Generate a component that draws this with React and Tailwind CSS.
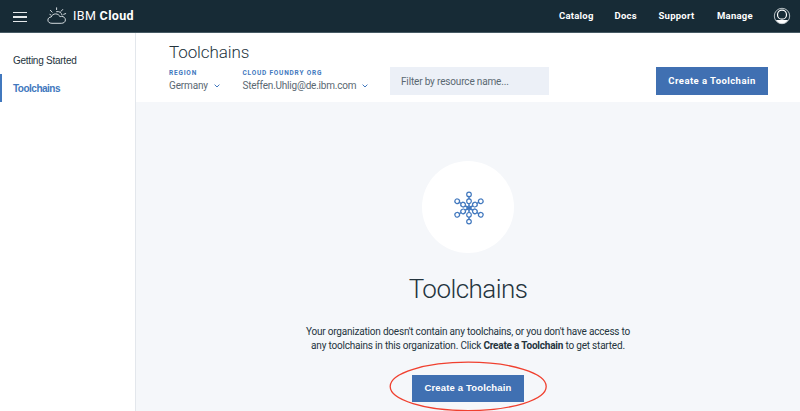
import React from "react";

function CloudLogo() {
  return (
    <svg className="block h-[18px] w-[20px]" viewBox="0 0 20 18" fill="none" stroke="#d3dade" strokeWidth="1" strokeLinecap="round">
      <path d="M4.6 16.3C2.3 16.3.9 14.9.9 13.1c0-1.8 1.4-3.1 3.3-3.1.7-1.9 2.3-3.1 4.4-3.1 2.1 0 3.7 1.1 4.4 2.9 .5-.3 1-.4 1.6-.4 2.1 0 3.8 1.5 3.8 3.5s-1.6 3.4-3.8 3.4z" />
      <path d="M9.6 4.6c2.6-.5 5 1 5.5 3.4M4.1 8.1 2.9 7.5M5.1 5.2 3.4 3.3M9.6 2.6V.8M14.1 4.3l1.6-1.8M16.7 7.3l2-.7" />
    </svg>
  );
}

function Avatar() {
  return (
    <svg className="block h-[18px] w-[18px]" viewBox="0 0 18 18" fill="none">
      <path d="M2.8 13h12.4A7.8 7.8 0 0 1 9 16.7 7.8 7.8 0 0 1 2.8 13z" fill="#fff" />
      <circle cx="9" cy="9" r="7.7" stroke="#c9d1d5" strokeWidth=".9" />
      <circle cx="9" cy="7.7" r="4.5" fill="#172b36" stroke="#fff" strokeWidth="1.2" />
    </svg>
  );
}

function Chevron() {
  return (
    <svg className="block h-[4px] w-[6px]" viewBox="0 0 6 4" fill="none" stroke="#4178be" strokeWidth="1">
      <path d="M.6.6 3 3 5.4.6" />
    </svg>
  );
}

function ToolchainIcon() {
  return (
    <svg className="ml-[1px] mt-[1px] block h-[36px] w-[32px]" viewBox="-16 -18 32 36" fill="none" stroke="#4178be" strokeWidth="1.2">
      {[0, 60, 120, 180, 240, 300].map((angle) => (
        <g key={angle} transform={`rotate(${angle})`}>
          <circle cy="-13.6" r="2.3" />
          <circle cy="-6.8" r="2.3" />
          <path d="M0-11.3v2.2M0-4.5V0" strokeWidth="1.5" />
        </g>
      ))}
      <circle r="2" />
    </svg>
  );
}

export default function App() {
  return (
    <div className="relative flex h-[411px] w-[800px] flex-col overflow-hidden bg-[#f5f7fa] font-[Roboto,sans-serif] text-[#24343d]">
      <header className="flex h-[33px] shrink-0 items-center border-b border-[#465a64] bg-[#172b36] pl-[13px] text-white">
        <div className="flex w-[14px] flex-col gap-[3px] pt-[2px]">
          <span className="h-[1.5px] bg-[#e4e8ea]" />
          <span className="h-[1.5px] bg-[#e4e8ea]" />
          <span className="h-[1.5px] bg-[#e4e8ea]" />
        </div>
        <div className="ml-[20px]"><CloudLogo /></div>
        <div className="ml-[6px] w-[486px] whitespace-nowrap text-[12.5px] leading-[16px] tracking-[0.35px]">
          IBM <b className="font-bold">Cloud</b>
        </div>
        <nav className="flex text-[9.5px] font-bold leading-[12px] tracking-[0.25px]">
          <span className="w-[55.5px]">Catalog</span>
          <span className="w-[44px]">Docs</span>
          <span className="w-[58.5px]">Support</span>
          <span className="w-[56px]">Manage</span>
        </nav>
        <Avatar />
      </header>
      <div className="flex min-h-0 flex-1">
        <aside className="w-[136px] shrink-0 border-r border-[#e3e7ec] bg-white pt-[14px] font-['Liberation_Sans',sans-serif] text-[10px]">
          <div className="flex h-[27px] items-center pl-[13px] tracking-[-0.25px] text-[#24343d]">Getting Started</div>
          <div className="flex h-[28px] items-center border-l-2 border-[#4178be] pl-[11px] font-bold tracking-[-0.5px] text-[#4178be]">Toolchains</div>
        </aside>
        <main className="flex min-w-0 flex-1 flex-col">
          <div className="flex h-[69px] shrink-0 bg-white pl-[33px]">
            <div className="w-[221px] pt-[8px]">
              <h1 className="text-[17px] font-light leading-[22px] tracking-[-0.1px]">Toolchains</h1>
              <div className="flex pt-[5px]">
                <div className="w-[73.5px]">
                  <div className="text-[6.5px] font-bold leading-[10px] tracking-[0.8px] text-[#4178be]">REGION</div>
                  <div className="flex items-center gap-[6px] text-[10px] leading-[15px] tracking-[-0.15px] text-[#5a6872]">Germany <Chevron /></div>
                </div>
                <div>
                  <div className="whitespace-nowrap text-[6.5px] font-bold leading-[10px] tracking-[0.8px] text-[#4178be]">CLOUD FOUNDRY ORG</div>
                  <div className="flex items-center gap-[6px] text-[10px] leading-[15px] tracking-[-0.22px] text-[#5a6872]">Steffen.Uhlig@de.ibm.com <Chevron /></div>
                </div>
              </div>
            </div>
            <div className="mt-[34px] flex h-[28px] w-[159px] items-center bg-[#ecf0f7] pl-[11px] text-[10px] tracking-[-0.16px] text-[#5a6872]">Filter by resource name...</div>
            <button className="ml-[107px] mt-[34px] flex h-[28px] w-[112px] items-center justify-center bg-[#4070b2] text-[9.5px] font-bold tracking-[0.45px] text-white">Create a Toolchain</button>
          </div>
          <section className="flex flex-col items-center pt-[59px]">
            <div className="flex h-[92px] w-[92px] items-center justify-center rounded-full bg-white"><ToolchainIcon /></div>
            <h2 className="mt-[20px] text-[26px] font-light leading-[32px] tracking-[-0.55px]">Toolchains</h2>
            <p className="mt-[20px] text-center text-[10px] leading-[14px] tracking-[-0.2px]">
              Your organization doesn't contain any toolchains, or you don't have access to<br />
              any toolchains in this organization. Click <b className="font-bold">Create a Toolchain</b> to get started.
            </p>
            <button className="mt-[22px] flex h-[27px] w-[112px] items-center justify-center bg-[#4070b2] font-['Liberation_Sans',sans-serif] text-[9.5px] font-bold tracking-[0.15px] text-white">Create a Toolchain</button>
          </section>
        </main>
      </div>
      <svg className="pointer-events-none absolute left-[388px] top-[360px] h-[51px] w-[160px]" viewBox="0 0 160 51" fill="none">
        <ellipse cx="80.2" cy="26.4" rx="78" ry="24.2" stroke="#f0402f" strokeWidth="1.3" />
      </svg>
    </div>
  );
}
